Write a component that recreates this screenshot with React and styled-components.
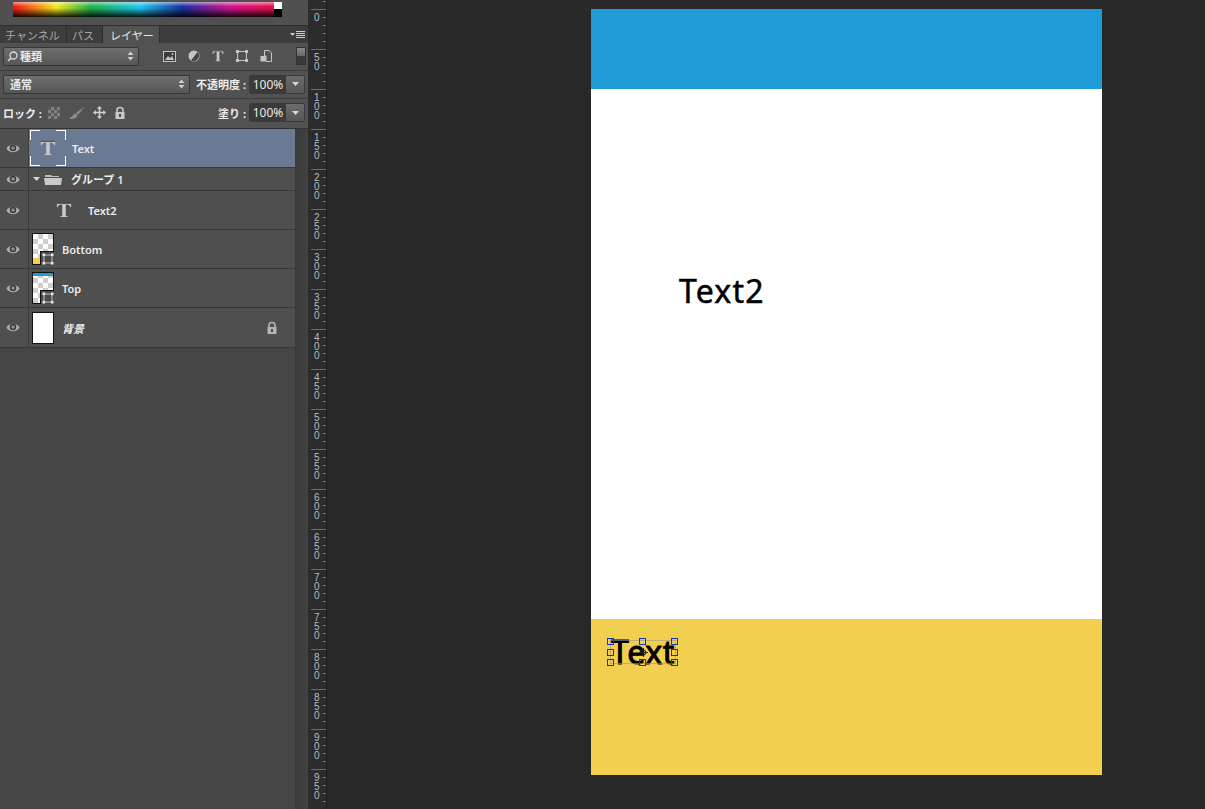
import React from 'react'
import styled, { createGlobalStyle } from 'styled-components'

const RULER_MARKS = [0, 50, 100, 150, 200, 250, 300, 350, 400, 450, 500, 550, 600, 650, 700, 750, 800, 850, 900, 950]

const EyeIcon = () => (
    <svg width="14" height="11" viewBox="0 0 14 11">
        <path d="M0.5 5.5 C3 0.5 11 0.5 13.5 5.5 C11 10.5 3 10.5 0.5 5.5 Z" fill="#b0b0b0" />
        <circle cx="7" cy="5" r="3.3" fill="#3a3a3a" />
        <circle cx="7" cy="5" r="1.8" fill="#8e8e8e" />
    </svg>
)

const TypeIcon = ({ size = 18 }) => (
    <svg width={size} height={size} viewBox="0 0 18 18">
        <path d="M1 1 H17 V6 H16 C15.6 3.6 14.4 2.8 11 2.8 V15 C11 16 12 16.4 13.5 16.4 V17 H4.5 V16.4 C6 16.4 7 16 7 15 V2.8 C3.6 2.8 2.4 3.6 2 6 H1 Z" fill="#c9c9c9" />
        <path d="M1 1 H17 V2 H1 Z" fill="#333" />
    </svg>
)

const SmartBadge = () => (
    <BadgeBox>
        <svg width="12" height="12" viewBox="0 0 12 12">
            <rect x="2" y="2" width="8" height="8" fill="none" stroke="#c4c4c4" strokeWidth="1" />
            <rect x="0.5" y="0.5" width="2.6" height="2.6" fill="#e8e8e8" />
            <rect x="8.9" y="0.5" width="2.6" height="2.6" fill="#e8e8e8" />
            <rect x="0.5" y="8.9" width="2.6" height="2.6" fill="#e8e8e8" />
            <rect x="8.9" y="8.9" width="2.6" height="2.6" fill="#e8e8e8" />
        </svg>
    </BadgeBox>
)

const LockIcon = ({ color = '#c8c8c8' }) => (
    <svg width="12" height="13" viewBox="0 0 12 13">
        <path d="M3 6 V4 C3 0.6 9 0.6 9 4 V6" fill="none" stroke={color} strokeWidth="1.6" />
        <rect x="1.5" y="6" width="9" height="7" fill={color} />
        <rect x="5" y="8" width="2" height="3" fill="#444" />
    </svg>
)

const Stepper = () => (
    <svg width="7" height="10" viewBox="0 0 7 10">
        <path d="M3.5 0.5 L6.5 4 H0.5 Z M3.5 9.5 L6.5 6 H0.5 Z" fill="#d0d0d0" />
    </svg>
)

const DownCaret = () => (
    <svg width="7" height="4" viewBox="0 0 7 4">
        <path d="M0 0 H7 L3.5 4 Z" fill="#d8d8d8" />
    </svg>
)

const Layer = ({ height, selected, children }) => (
    <LayerRow $height={height} $selected={selected}>
        <EyeCell><EyeIcon /></EyeCell>
        <LayerBody>{children}</LayerBody>
    </LayerRow>
)

const LayersPanel = () => (
    <Panel>
        <SpectrumRow>
            <Spectrum>
                <SpectrumEnd />
            </Spectrum>
        </SpectrumRow>
        <Tabs>
            <Tab $width={67}>チャンネル</Tab>
            <Tab $width={36}>パス</Tab>
            <Tab $width={57} $active>レイヤー</Tab>
            <TabMenu>
                <svg width="15" height="8" viewBox="0 0 15 8">
                    <path d="M0 2 H5 L2.5 5 Z" fill="#ccc" />
                    <path d="M6 0.5 H15 M6 2.5 H15 M6 4.5 H15 M6 6.5 H15" stroke="#ccc" strokeWidth="1" />
                </svg>
            </TabMenu>
        </Tabs>
        <FilterRow>
            <Select $width={136}>
                <SelectLabel>
                    <svg width="11" height="11" viewBox="0 0 11 11">
                        <circle cx="6.5" cy="4.5" r="3.5" fill="none" stroke="#ddd" strokeWidth="1.3" />
                        <path d="M4 7 L1 10" stroke="#ddd" strokeWidth="1.5" />
                    </svg>
                    種類
                </SelectLabel>
                <Stepper />
            </Select>
            <FilterIcons>
                <svg width="13" height="11" viewBox="0 0 13 11">
                    <rect x="0.5" y="0.5" width="12" height="10" fill="#3c3c3c" stroke="#c4c4c4" />
                    <path d="M2 9 L5 5 L7 7 L9 5 L11 9 Z" fill="#c4c4c4" />
                    <circle cx="9.5" cy="3" r="1" fill="#c4c4c4" />
                </svg>
                <svg width="12" height="12" viewBox="0 0 12 12">
                    <circle cx="6" cy="6" r="5.5" fill="#c4c4c4" />
                    <path d="M9.5 2 A5.5 5.5 0 0 1 3 10.6 Z" fill="#444" />
                </svg>
                <TypeIcon size={12} />
                <svg width="12" height="12" viewBox="0 0 12 12">
                    <rect x="1.5" y="1.5" width="9" height="9" fill="none" stroke="#c4c4c4" />
                    <rect x="0" y="0" width="3" height="3" fill="#c4c4c4" />
                    <rect x="9" y="0" width="3" height="3" fill="#c4c4c4" />
                    <rect x="0" y="9" width="3" height="3" fill="#c4c4c4" />
                    <rect x="9" y="9" width="3" height="3" fill="#c4c4c4" />
                </svg>
                <svg width="12" height="12" viewBox="0 0 12 12">
                    <path d="M4.5 0.5 H9 L11.5 3 V11.5 H6 V6 H4.5 Z" fill="none" stroke="#c4c4c4" />
                    <rect x="0.5" y="6" width="5.5" height="5.5" fill="#c4c4c4" />
                </svg>
            </FilterIcons>
            <FilterToggle />
        </FilterRow>
        <OptionRow>
            <Select $width={187}>
                <SelectLabel $pad>通常</SelectLabel>
                <Stepper />
            </Select>
            <OptionGroup>
                <OptionLabel>不透明度 :</OptionLabel>
                <Percent>
                    <PercentValue>100%</PercentValue>
                    <PercentCaret><DownCaret /></PercentCaret>
                </Percent>
            </OptionGroup>
        </OptionRow>
        <LockRow>
            <LockTools>
                <OptionLabel>ロック :</OptionLabel>
                <LockChecker />
                <svg width="17" height="14" viewBox="0 0 17 14">
                    <path d="M16.5 0.5 L8 7 L10 9 Z" fill="#8c8c8c" />
                    <path d="M7.5 7.5 C5 7.5 5 11 1 12.5 C5 13.5 9 12.5 9.5 9.5 Z" fill="#8c8c8c" />
                </svg>
                <svg width="13" height="13" viewBox="0 0 13 13">
                    <path d="M6.5 0 L9 2.8 H7.3 V5.7 H10.2 V4 L13 6.5 L10.2 9 V7.3 H7.3 V10.2 H9 L6.5 13 L4 10.2 H5.7 V7.3 H2.8 V9 L0 6.5 L2.8 4 V5.7 H5.7 V2.8 H4 Z" fill="#d0d0d0" />
                </svg>
                <LockIcon />
            </LockTools>
            <OptionGroup>
                <OptionLabel>塗り :</OptionLabel>
                <Percent>
                    <PercentValue>100%</PercentValue>
                    <PercentCaret><DownCaret /></PercentCaret>
                </Percent>
            </OptionGroup>
        </LockRow>
        <PanelBody>
            <Layers>
                <Layer height={39} selected>
                    <TypeThumb>
                        <TypeIcon size={16} />
                    </TypeThumb>
                    <LayerName $gap={6}>Text</LayerName>
                </Layer>
                <Layer height={23}>
                    <GroupHead>
                        <DownCaret />
                        <svg width="18" height="11" viewBox="0 0 18 11">
                            <path d="M1 3 V1 H7 L8 2 H15 V3 Z" fill="#bdbdbd" />
                            <path d="M0 4 H18 L17 11 H1 Z" fill="#c9c9c9" />
                        </svg>
                    </GroupHead>
                    <LayerName $gap={9}>グループ 1</LayerName>
                </Layer>
                <Layer height={39}>
                    <ChildIcon>
                        <TypeIcon size={16} />
                    </ChildIcon>
                    <LayerName $gap={16}>Text2</LayerName>
                </Layer>
                <Layer height={39}>
                    <Thumb $checker>
                        <ThumbFill $bottom $width={7} $height={6} $color="#f3cf4f" />
                        <SmartBadge />
                    </Thumb>
                    <LayerName $gap={8}>Bottom</LayerName>
                </Layer>
                <Layer height={39}>
                    <Thumb $checker>
                        <ThumbFill $width={20} $height={3} $color="#1f9cd8" />
                        <SmartBadge />
                    </Thumb>
                    <LayerName $gap={8}>Top</LayerName>
                </Layer>
                <Layer height={40}>
                    <Thumb />
                    <LayerName $gap={8} $italic>背景</LayerName>
                    <LayerLock><LockIcon color="#b4b4b4" /></LayerLock>
                </Layer>
            </Layers>
            <Track />
        </PanelBody>
    </Panel>
)

const Ruler = () => (
    <RulerColumn>
        <RulerLead />
        {RULER_MARKS.map((mark) => (
            <RulerMark key={mark}>
                <RulerDigits>
                    {String(mark).split('').map((digit, i) => (
                        <span key={i}>{digit}</span>
                    ))}
                </RulerDigits>
            </RulerMark>
        ))}
    </RulerColumn>
)

const App = () => (
    <>
        <GlobalStyle />
        <Workspace>
            <LayersPanel />
            <Ruler />
            <Canvas>
                <Artboard>
                    <TopBand />
                    <MiddleBand>
                        <Headline>Text2</Headline>
                    </MiddleBand>
                    <BottomBand>
                        <SelectedText>
                            Text
                            <Handle $x="0" $y="0" />
                            <Handle $x="32px" $y="0" />
                            <Handle $x="64px" $y="0" />
                            <Handle $x="0" $y="11px" />
                            <Handle $x="64px" $y="11px" />
                            <Handle $x="0" $y="21px" />
                            <Handle $x="32px" $y="21px" />
                            <Handle $x="64px" $y="21px" />
                            <CenterMark>
                                <svg width="9" height="9" viewBox="0 0 9 9">
                                    <circle cx="4.5" cy="4.5" r="2.5" fill="none" stroke="#222" strokeWidth="1" />
                                    <path d="M4.5 0 V9 M0 4.5 H9" stroke="#222" strokeWidth="1" />
                                </svg>
                            </CenterMark>
                        </SelectedText>
                    </BottomBand>
                </Artboard>
            </Canvas>
        </Workspace>
    </>
)

export default App

const UI_FONT = `"Noto Sans", "Noto Sans CJK JP", sans-serif`

const GlobalStyle = createGlobalStyle`
    html, body {
        margin: 0;
        padding: 0;
        height: 100%;
        background: #282828;
        overflow: hidden;
    }
    #root {
        height: 100%;
    }
`

const Workspace = styled.div`
    display: flex;
    width: 1205px;
    height: 809px;
    overflow: hidden;
    font-family: ${UI_FONT};
    background: #282828;
`

const Panel = styled.div`
    width: 311px;
    flex: none;
    box-sizing: border-box;
    display: flex;
    flex-direction: column;
    background: #505050;
    border-right: 3px solid #2c2c2c;
`

const SpectrumRow = styled.div`
    height: 25px;
    flex: none;
    box-sizing: border-box;
    padding: 2px 13px 0;
    background: #505050;
`

const Spectrum = styled.div`
    position: relative;
    width: 269px;
    height: 15px;
    background:
        linear-gradient(to bottom, rgba(255, 255, 255, 0.55) 0%, rgba(255, 255, 255, 0) 30%, rgba(0, 0, 0, 0) 40%, rgba(0, 0, 0, 0.9) 100%),
        linear-gradient(to right, #f01414 0%, #f5e61e 16%, #1fb04a 29%, #1fc4e8 47%, #1a2f9c 63%, #d0148c 81%, #e8103c 100%);
`

const SpectrumEnd = styled.div`
    position: absolute;
    top: 0;
    right: 0;
    width: 8px;
    height: 100%;
    background: linear-gradient(to bottom, #fff 50%, #000 50%);
`

const Tabs = styled.div`
    height: 18px;
    flex: none;
    box-sizing: border-box;
    display: flex;
    align-items: stretch;
    background: #3d3d3d;
    border-top: 1px solid #2e2e2e;
`

const Tab = styled.div`
    width: ${(p) => p.$width}px;
    flex: none;
    box-sizing: border-box;
    padding-left: ${(p) => (p.$active ? '7px' : '5px')};
    display: flex;
    align-items: center;
    font-size: 11px;
    white-space: nowrap;
    color: ${(p) => (p.$active ? '#e4e4e4' : '#a8a8a8')};
    background: ${(p) => (p.$active ? '#525252' : 'transparent')};
    border-right: 1px solid #2e2e2e;
`

const TabMenu = styled.div`
    margin-left: auto;
    padding-right: 3px;
    display: flex;
    align-items: center;
`

const FilterRow = styled.div`
    height: 28px;
    flex: none;
    box-sizing: border-box;
    display: flex;
    align-items: center;
    padding: 0 2px 1px 3px;
    background: #525252;
    border-bottom: 1px solid #3c3c3c;
`

const Select = styled.div`
    width: ${(p) => p.$width}px;
    height: 19px;
    box-sizing: border-box;
    display: flex;
    align-items: center;
    justify-content: space-between;
    padding: 0 4px 0 3px;
    border: 1px solid #363636;
    border-radius: 2px;
    background: linear-gradient(to bottom, #6e6e6e, #565656);
`

const SelectLabel = styled.span`
    display: flex;
    align-items: center;
    gap: 2px;
    padding-left: ${(p) => (p.$pad ? '3px' : '0')};
    font-size: 11px;
    font-weight: bold;
    color: #e8e8e8;
`

const FilterIcons = styled.div`
    display: flex;
    align-items: center;
    gap: 12px;
    margin-left: 24px;
`

const FilterToggle = styled.div`
    width: 10px;
    height: 18px;
    margin-left: auto;
    box-sizing: border-box;
    border: 1px solid #333;
    background: linear-gradient(to bottom, #8a8a8a 0, #666 50%, #3a3a3a 50%, #3a3a3a 100%);
`

const OptionRow = styled.div`
    height: 28px;
    flex: none;
    box-sizing: border-box;
    display: flex;
    align-items: center;
    justify-content: space-between;
    padding: 0 3px 1px 3px;
    background: #525252;
    border-bottom: 1px solid #3c3c3c;
`

const LockRow = styled(OptionRow)`
    height: 30px;
    padding-bottom: 2px;
    border-bottom: 1px solid #333;
`

const OptionGroup = styled.div`
    display: flex;
    align-items: center;
    gap: 3px;
`

const OptionLabel = styled.span`
    font-size: 11px;
    font-weight: bold;
    color: #ececec;
    white-space: nowrap;
`

const Percent = styled.div`
    width: 56px;
    height: 19px;
    display: flex;
    box-sizing: border-box;
    border: 1px solid #3a3a3a;
    border-radius: 2px;
    overflow: hidden;
`

const PercentValue = styled.div`
    flex: 1;
    display: flex;
    align-items: center;
    justify-content: center;
    background: #3a3a3a;
    font-size: 12px;
    color: #e8e8e8;
`

const PercentCaret = styled.div`
    width: 18px;
    display: flex;
    align-items: center;
    justify-content: center;
    background: linear-gradient(to bottom, #6c6c6c, #565656);
`

const LockTools = styled.div`
    display: flex;
    align-items: center;
    gap: 8px;
`

const LockChecker = styled.div`
    width: 12px;
    height: 12px;
    margin-left: -2px;
    background: repeating-conic-gradient(#808080 0 25%, #5a5a5a 0 50%) 0 0 / 6px 6px;
`

const PanelBody = styled.div`
    flex: 1;
    display: flex;
    min-height: 0;
    background: #464646;
`

const Layers = styled.div`
    width: 295px;
    flex: none;
    display: flex;
    flex-direction: column;
`

const Track = styled.div`
    flex: 1;
    background: linear-gradient(to right, #3a3a3a, #424242);
`

const LayerRow = styled.div`
    height: ${(p) => p.$height}px;
    flex: none;
    box-sizing: border-box;
    display: flex;
    align-items: stretch;
    background: ${(p) => (p.$selected ? '#6b7a93' : '#4f4f4f')};
    border-bottom: 1px solid #383838;
`

const EyeCell = styled.div`
    width: 29px;
    flex: none;
    box-sizing: border-box;
    padding-right: 3px;
    display: flex;
    align-items: center;
    justify-content: center;
    background: #4f4f4f;
    border-right: 1px solid #3c3c3c;
`

const LayerBody = styled.div`
    flex: 1;
    display: flex;
    align-items: center;
    padding-left: 3px;
    position: relative;
`

const LayerName = styled.span`
    margin-left: ${(p) => p.$gap}px;
    font-size: 11px;
    font-weight: 600;
    font-style: ${(p) => (p.$italic ? 'italic' : 'normal')};
    color: #ececec;
    white-space: nowrap;
`

const TypeThumb = styled.div`
    width: 36px;
    height: 36px;
    flex: none;
    margin-left: -2px;
    display: flex;
    align-items: center;
    justify-content: center;
    background:
        linear-gradient(#fff, #fff) 0 0 / 10px 1px no-repeat,
        linear-gradient(#fff, #fff) 0 0 / 1px 10px no-repeat,
        linear-gradient(#fff, #fff) 100% 0 / 10px 1px no-repeat,
        linear-gradient(#fff, #fff) 100% 0 / 1px 10px no-repeat,
        linear-gradient(#fff, #fff) 0 100% / 10px 1px no-repeat,
        linear-gradient(#fff, #fff) 0 100% / 1px 10px no-repeat,
        linear-gradient(#fff, #fff) 100% 100% / 10px 1px no-repeat,
        linear-gradient(#fff, #fff) 100% 100% / 1px 10px no-repeat;
`

const GroupHead = styled.div`
    display: flex;
    align-items: center;
    gap: 4px;
    margin-left: 1px;
`

const ChildIcon = styled.div`
    margin-left: 24px;
    width: 16px;
    display: flex;
    align-items: center;
`

const Thumb = styled.div`
    width: 22px;
    height: 32px;
    flex: none;
    box-sizing: border-box;
    position: relative;
    border: 1px solid #111;
    background: ${(p) => (p.$checker
        ? 'repeating-conic-gradient(#cfcfcf 0 25%, #fff 0 50%) 0 0 / 10px 10px'
        : '#fff')};
`

const ThumbFill = styled.div`
    position: absolute;
    left: 0;
    ${(p) => (p.$bottom ? 'bottom: 0;' : 'top: 0;')}
    width: ${(p) => p.$width}px;
    height: ${(p) => p.$height}px;
    background: ${(p) => p.$color};
`

const BadgeBox = styled.div`
    position: absolute;
    right: -1px;
    bottom: -1px;
    width: 14px;
    height: 14px;
    box-sizing: border-box;
    display: flex;
    align-items: center;
    justify-content: center;
    background: #4a4a4a;
    border-top: 1px solid #111;
    border-left: 1px solid #111;
`

const LayerLock = styled.div`
    position: absolute;
    right: 17px;
    top: 13px;
    display: flex;
`

const RulerColumn = styled.div`
    width: 16px;
    flex: none;
    box-sizing: border-box;
    display: flex;
    flex-direction: column;
    overflow: hidden;
    background: #2b2b2b;
    border-right: 1px solid #1c1c1c;
`

const RulerLead = styled.div`
    height: 9px;
    flex: none;
    background: linear-gradient(#777, #777) 12px 1px / 3px 1px no-repeat;
`

const RulerMark = styled.div`
    height: 40px;
    flex: none;
    box-sizing: border-box;
    border-top: 1px solid #6c6c6c;
    background:
        repeating-linear-gradient(to bottom, transparent 0 7px, #777 7px 8px) 12px 0 / 3px 100% no-repeat;
`

const RulerDigits = styled.div`
    display: flex;
    flex-direction: column;
    padding: 4px 0 0 3px;
    font-size: 10px;
    line-height: 8.8px;
    color: #b4bcc8;
    font-family: "Liberation Sans", sans-serif;
`

const Canvas = styled.div`
    flex: 1;
    padding: 9px 0 0 264px;
    background: #282828;
`

const Artboard = styled.div`
    width: 511px;
    height: 766px;
    display: flex;
    flex-direction: column;
    background: #fff;
`

const TopBand = styled.div`
    height: 80px;
    flex: none;
    background: #1f9cd8;
`

const MiddleBand = styled.div`
    flex: 1;
    padding: 183px 0 0 88px;
`

const Headline = styled.div`
    font-family: "Noto Sans", "Liberation Sans", sans-serif;
    font-size: 32px;
    line-height: 38px;
    letter-spacing: 1.2px;
    -webkit-text-stroke: 0.5px #000;
    color: #000;
`

const BottomBand = styled.div`
    height: 156px;
    flex: none;
    box-sizing: border-box;
    padding: 22px 0 0 20px;
    background: #f3cf4f;
`

const SelectedText = styled.div`
    position: relative;
    width: 64px;
    height: 22px;
    font-family: "Noto Sans", "Liberation Sans", sans-serif;
    font-size: 32px;
    line-height: 22px;
    letter-spacing: 0.6px;
    -webkit-text-stroke: 1px #000;
    color: #000;
    white-space: nowrap;
    outline: 1px solid rgba(150, 150, 150, 0.6);
`

const Handle = styled.span`
    position: absolute;
    left: ${(p) => p.$x};
    top: ${(p) => p.$y};
    width: 7px;
    height: 7px;
    box-sizing: border-box;
    margin: -3px 0 0 -4px;
    -webkit-text-stroke: 0;
    border: 1px solid #1030d0;
`

const CenterMark = styled.span`
    position: absolute;
    left: 50%;
    top: 50%;
    margin: -4px 0 0 -4px;
    display: flex;
`
